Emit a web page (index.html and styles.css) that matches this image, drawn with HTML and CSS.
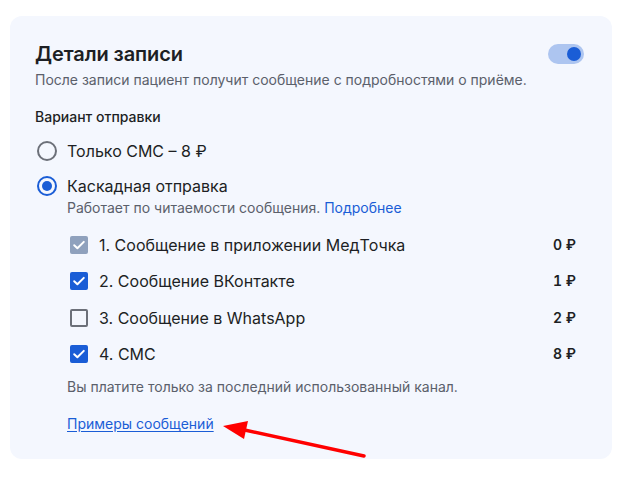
FILE: index.html
```html
<!DOCTYPE html>
<html lang="ru">
<head>
<meta charset="utf-8">
<link rel="stylesheet" href="styles.css">
</head>
<body>
<div class="card">
  <div class="head">
    <h1 class="title">Детали записи</h1>
    <span class="toggle"><span class="knob"></span></span>
  </div>
  <p class="subtitle">После записи пациент получит сообщение с подробностями о приёме.</p>

  <div class="section-label">Вариант отправки</div>

  <div class="radio-row">
    <span class="radio-box"><span class="radio"></span></span>
    <span class="radio-text">Только СМС – 8 ₽</span>
  </div>
  <div class="radio-row second">
    <span class="radio-box"><span class="radio checked"></span></span>
    <span class="radio-text">Каскадная отправка</span>
  </div>
  <div class="hint">Работает по читаемости сообщения. <a class="link" href="#">Подробнее</a></div>

  <div class="channels">
    <div class="channel">
      <span class="cb-box"><span class="cb disabled"><svg viewBox="0 0 18 18"><path d="M4.2 9.2l3.2 3.1 6.4-6.4" /></svg></span></span>
      <span class="channel-name">1. Сообщение в приложении МедТочка</span>
      <span class="price">0 ₽</span>
    </div>
    <div class="channel">
      <span class="cb-box"><span class="cb checked"><svg viewBox="0 0 18 18"><path d="M4.2 9.2l3.2 3.1 6.4-6.4" /></svg></span></span>
      <span class="channel-name">2. Сообщение ВКонтакте</span>
      <span class="price">1 ₽</span>
    </div>
    <div class="channel">
      <span class="cb-box"><span class="cb"></span></span>
      <span class="channel-name">3. Сообщение в WhatsApp</span>
      <span class="price">2 ₽</span>
    </div>
    <div class="channel">
      <span class="cb-box"><span class="cb checked"><svg viewBox="0 0 18 18"><path d="M4.2 9.2l3.2 3.1 6.4-6.4" /></svg></span></span>
      <span class="channel-name">4. СМС</span>
      <span class="price">8 ₽</span>
    </div>
  </div>

  <div class="note">Вы платите только за последний использованный канал.</div>
  <div class="examples"><a class="link underline" href="#">Примеры сообщений</a></div>
</div>

<svg class="arrow" width="623" height="479" viewBox="0 0 623 479">
  <line x1="364" y1="456" x2="240" y2="429" stroke="#ff0000" stroke-width="3.5" stroke-linecap="round"/>
  <polygon points="223,426 248,421 244,439" fill="#ff0000"/>
</svg>
</body>
</html>
```

FILE: styles.css
```css
html, body {
  margin: 0;
  padding: 0;
  background: #ffffff;
}

body {
  font-family: Inter, "Noto Sans", sans-serif;
  color: #1d1f24;
  width: 623px;
  height: 479px;
  overflow: hidden;
  position: relative;
}

.card {
  margin: 16px 0 0 10px;
  width: 602px;
  box-sizing: border-box;
  background: #f4f7fe;
  border-radius: 12px;
  padding: 24px 28px 25px 25px;
}

.head {
  display: flex;
  align-items: center;
  justify-content: space-between;
  height: 28px;
}

.title {
  margin: 0;
  font-size: 20px;
  line-height: 28px;
  font-weight: 600;
  letter-spacing: -0.1px;
}

.toggle {
  width: 36px;
  height: 20px;
  border-radius: 10px;
  background: #adc5f0;
  display: flex;
  align-items: center;
  justify-content: flex-end;
  padding: 0 3px;
  box-sizing: border-box;
}

.knob {
  width: 14px;
  height: 14px;
  border-radius: 50%;
  background: #1a5dd6;
}

.subtitle {
  margin: 2px 0 0;
  font-size: 14px;
  line-height: 20px;
  color: #5b606b;
}

.section-label {
  margin-top: 17px;
  font-size: 14px;
  line-height: 20px;
  font-weight: 500;
}

.radio-row {
  display: flex;
  align-items: center;
  gap: 8px;
  height: 24px;
  margin-top: 12px;
}

.radio-row.second {
  margin-top: 11px;
}

.radio-box {
  width: 24px;
  height: 24px;
  display: flex;
  align-items: center;
  justify-content: center;
}

.radio {
  width: 20px;
  height: 20px;
  box-sizing: border-box;
  border-radius: 50%;
  border: 2px solid #6c7079;
  display: flex;
  align-items: center;
  justify-content: center;
}

.radio.checked {
  border-color: #1a5dd6;
}

.radio.checked::after {
  content: "";
  width: 10px;
  height: 10px;
  border-radius: 50%;
  background: #1a5dd6;
}

.radio-text {
  font-size: 16px;
  line-height: 24px;
}

.hint {
  margin-left: 32px;
  font-size: 14px;
  line-height: 20px;
  color: #5b606b;
}

.link {
  color: #1a5dd6;
  text-decoration: none;
}

.link.underline {
  text-decoration: underline;
  text-underline-offset: 2px;
}

.channels {
  margin: 15px 0 0 32px;
  padding-right: 8px;
  display: flex;
  flex-direction: column;
  gap: 12.3px;
}

.channel {
  display: flex;
  align-items: center;
  gap: 8px;
  height: 24px;
}

.cb-box {
  width: 24px;
  height: 24px;
  display: flex;
  align-items: center;
  justify-content: center;
}

.cb {
  width: 18px;
  height: 18px;
  box-sizing: border-box;
  border-radius: 2px;
  border: 2px solid #6c7079;
  display: flex;
  align-items: center;
  justify-content: center;
}

.cb.checked {
  background: #1a5dd6;
  border-color: #1a5dd6;
}

.cb.disabled {
  background: #8fa1bd;
  border-color: #8fa1bd;
}

.cb svg {
  width: 18px;
  height: 18px;
  flex: none;
}

.cb svg path {
  fill: none;
  stroke: #ffffff;
  stroke-width: 2;
  stroke-linecap: round;
  stroke-linejoin: round;
}

.channel-name {
  flex: 1;
  font-size: 16px;
  line-height: 24px;
}

.price {
  font-size: 14px;
  font-weight: 600;
  line-height: 20px;
  font-variant-numeric: tabular-nums;
}

.note {
  margin: 11px 0 0 32px;
  font-size: 14px;
  line-height: 20px;
  color: #5b606b;
}

.examples {
  margin: 17px 0 0 32px;
  font-size: 14px;
  line-height: 20px;
}

.arrow {
  position: absolute;
  left: 0;
  top: 0;
  pointer-events: none;
}
```
